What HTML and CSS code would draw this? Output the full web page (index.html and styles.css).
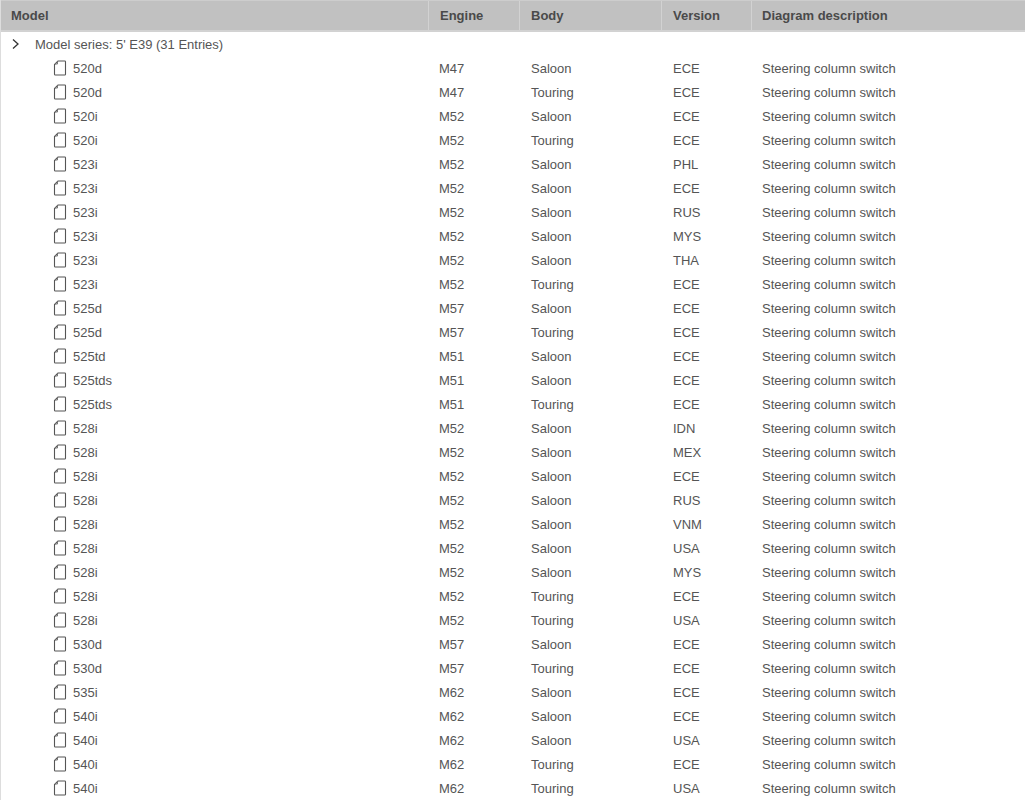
FILE: index.html
```html
<!DOCTYPE html>
<html lang="en">
<head>
<meta charset="utf-8">
<title>Model series</title>
<link rel="stylesheet" href="styles.css">
</head>
<body>
<div class="view">
<div class="head">
<div class="hcell c1">Model</div><div class="hcell c2">Engine</div><div class="hcell c3">Body</div><div class="hcell c4">Version</div><div class="hcell c5">Diagram description</div>
</div>
<div class="group"><svg class="chev" width="10" height="12" viewBox="0 0 10 12"><path d="M2 1.500 7 6 2 10.500" fill="none" stroke="#333" stroke-width="1.300"/></svg><span>Model series: 5' E39 (31 Entries)</span></div>
<div id="rows"></div>
</div>
<script src="rows.js"></script>
</body>
</html>
```
FILE: rows.js
```js
var data = "520d M47 Saloon ECE,520d M47 Touring ECE,520i M52 Saloon ECE,520i M52 Touring ECE,523i M52 Saloon PHL,523i M52 Saloon ECE,523i M52 Saloon RUS,523i M52 Saloon MYS,523i M52 Saloon THA,523i M52 Touring ECE,525d M57 Saloon ECE,525d M57 Touring ECE,525td M51 Saloon ECE,525tds M51 Saloon ECE,525tds M51 Touring ECE,528i M52 Saloon IDN,528i M52 Saloon MEX,528i M52 Saloon ECE,528i M52 Saloon RUS,528i M52 Saloon VNM,528i M52 Saloon USA,528i M52 Saloon MYS,528i M52 Touring ECE,528i M52 Touring USA,530d M57 Saloon ECE,530d M57 Touring ECE,535i M62 Saloon ECE,540i M62 Saloon ECE,540i M62 Saloon USA,540i M62 Touring ECE,540i M62 Touring USA".split(",");
var icon = '<svg class="doc" width="14" height="16" viewBox="0 0 14 16"><path d="M5 1H11.700Q12.500 1 12.500 1.800V14.200Q12.500 15 11.700 15H2.300Q1.500 15 1.500 14.200V4.500Z" fill="none" stroke="#555" stroke-width="1.100"/><path d="M4.500 1.500V4H2" fill="none" stroke="#777" stroke-width="1"/></svg>';
document.getElementById("rows").innerHTML = data.map(function (r) {
  var p = r.split(" ");
  return '<div class="row"><div class="cell c1 model">' + icon + '<span>' + p[0] + '</span></div><div class="cell c2">' + p[1] + '</div><div class="cell c3">' + p[2] + '</div><div class="cell c4">' + p[3] + '</div><div class="cell c5">Steering column switch</div></div>';
}).join("");
```
FILE: styles.css
```css
html, body { margin: 0; padding: 0; background: #fff; overflow: hidden; }
body { font-family: "Liberation Sans", Arial, sans-serif; font-size: 13px; color: #555; }
.view { height: 800px; overflow: hidden; border-left: 1px solid #ddd; box-sizing: border-box; }
.head { display: flex; height: 32px; box-sizing: border-box; background: #c1c1c1; border-top: 1px solid #cdcdcd; border-bottom: 2px solid #d2d2d2; margin-left: -1px; }
.hcell { display: flex; align-items: center; box-sizing: border-box; font-weight: bold; color: #4a4a4a; border-right: 1px solid #d2d2d2; padding-bottom: 1px; }
.hcell.c1 { width: 429px; padding-left: 11px; }
.hcell.c2 { width: 91px; padding-left: 11px; }
.hcell.c3 { width: 142px; padding-left: 11px; }
.hcell.c4 { width: 90px; padding-left: 11px; }
.hcell.c5 { flex: 1; padding-left: 10px; border-right: 0; }
.group { display: flex; align-items: center; height: 24px; padding-left: 10px; }
.chev { margin-right: 14px; }
.row { display: flex; height: 24px; align-items: center; }
.cell { box-sizing: border-box; white-space: nowrap; }
.cell.c1 { width: 428px; }
.cell.c2 { width: 92px; padding-left: 10px; }
.cell.c3 { width: 142px; padding-left: 10px; }
.cell.c4 { width: 89px; padding-left: 10px; }
.cell.c5 { padding-left: 10px; }
.model { display: flex; align-items: center; padding-left: 52px; }
.doc { margin-right: 6px; }
```
